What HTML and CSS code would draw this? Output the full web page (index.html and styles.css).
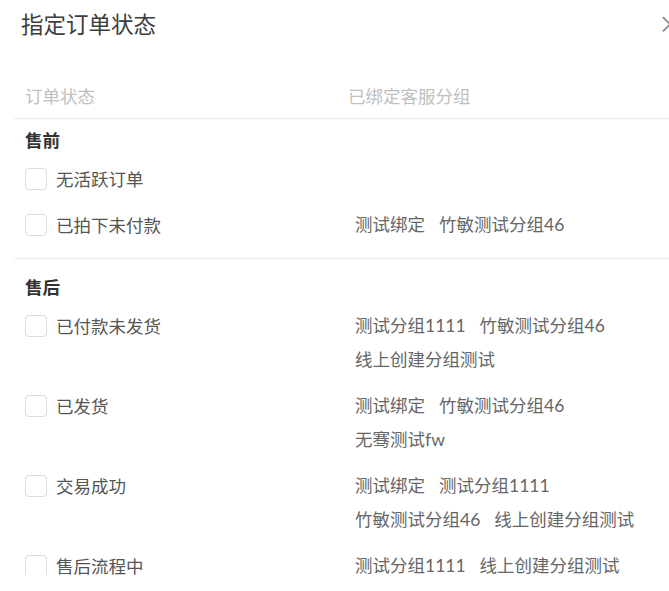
FILE: index.html
```html
<!DOCTYPE html>
<html lang="zh-CN">
<head>
<meta charset="utf-8">
<title>指定订单状态</title>
<link rel="stylesheet" href="styles.css">
</head>
<body>
<div class="modal">
  <div class="modal-head">
    <h1 class="modal-title">指定订单状态</h1>
    <span class="modal-close">×</span>
  </div>
  <div class="table">
    <div class="thead">
      <div class="col-left th">订单状态</div>
      <div class="col-right th">已绑定客服分组</div>
    </div>
    <div class="tbody">
      <div class="group">
        <div class="group-title">售前</div>
        <div class="row">
          <div class="col-left cell"><span class="checkbox"></span><span class="label">无活跃订单</span></div>
          <div class="col-right tags"></div>
        </div>
        <div class="row">
          <div class="col-left cell"><span class="checkbox"></span><span class="label">已拍下未付款</span></div>
          <div class="col-right tags"><span class="tag">测试绑定</span><span class="tag">竹敏测试分组46</span></div>
        </div>
      </div>
      <div class="group">
        <div class="group-title">售后</div>
        <div class="row">
          <div class="col-left cell"><span class="checkbox"></span><span class="label">已付款未发货</span></div>
          <div class="col-right tags"><span class="tag">测试分组1111</span><span class="tag">竹敏测试分组46</span><span class="tag">线上创建分组测试</span></div>
        </div>
        <div class="row">
          <div class="col-left cell"><span class="checkbox"></span><span class="label">已发货</span></div>
          <div class="col-right tags"><span class="tag">测试绑定</span><span class="tag">竹敏测试分组46</span><span class="tag">无骞测试fw</span></div>
        </div>
        <div class="row">
          <div class="col-left cell"><span class="checkbox"></span><span class="label">交易成功</span></div>
          <div class="col-right tags"><span class="tag">测试绑定</span><span class="tag">测试分组1111</span><span class="tag">竹敏测试分组46</span><span class="tag">线上创建分组测试</span></div>
        </div>
        <div class="row">
          <div class="col-left cell"><span class="checkbox"></span><span class="label">售后流程中</span></div>
          <div class="col-right tags"><span class="tag">测试分组1111</span><span class="tag">线上创建分组测试</span></div>
        </div>
      </div>
    </div>
  </div>
</div>
</body>
</html>
```

FILE: styles.css
```css
html, body {
  margin: 0;
  padding: 0;
  background: #ffffff;
  overflow: hidden;
}

body {
  font-family: "Noto Sans CJK SC", "Noto Sans", sans-serif;
  width: 669px;
  height: 591px;
}

.modal {
  width: 720px;
}

.modal-head {
  display: flex;
  justify-content: space-between;
  align-items: flex-start;
  height: 74px;
}

.modal-title {
  margin: 8px 0 0 21px;
  font-size: 22.5px;
  line-height: 30px;
  font-weight: 400;
  color: #3d3d3d;
}

.modal-close {
  margin: 8px 0 0 0;
  width: 62px;
  font-size: 24px;
  line-height: 30px;
  color: #888;
}

.table {
  margin-left: 14px;
  width: 700px;
}

.thead {
  display: flex;
  height: 44px;
  border-bottom: 1px solid #ececec;
}

.col-left {
  width: 334px;
  flex: none;
  box-sizing: border-box;
  padding-left: 11px;
}

.col-right {
  width: 312px;
  flex: none;
}

.th {
  font-size: 17.5px;
  line-height: 44px;
  color: #bfbfbf;
}

.tbody {
  height: 456px;
  overflow: hidden;
}

.group {
  padding: 9px 0 16px;
  border-bottom: 1px solid #ececec;
}

.group + .group {
  padding-top: 16px;
}

.group-title {
  padding-left: 11px;
  font-size: 17.5px;
  line-height: 24px;
  font-weight: 700;
  color: #333;
  margin-bottom: 10px;
}

.row {
  display: flex;
  margin-bottom: 12px;
}

.row:last-child {
  margin-bottom: 0;
}

.cell {
  display: flex;
  align-items: flex-start;
  gap: 9px;
}

.checkbox {
  width: 22px;
  height: 22px;
  margin-top: 6px;
  box-sizing: border-box;
  border: 1px solid #dcdcdc;
  border-radius: 4px;
  background: #fff;
  flex: none;
}

.label {
  font-size: 17.5px;
  line-height: 34px;
  color: #555;
}

.tags {
  display: flex;
  flex-wrap: wrap;
  min-height: 34px;
}

.tag {
  padding: 0 7px;
  font-family: "Lato", "Noto Sans CJK SC", sans-serif;
  font-size: 17.5px;
  line-height: 34px;
  color: #666;
  white-space: nowrap;
}
```
